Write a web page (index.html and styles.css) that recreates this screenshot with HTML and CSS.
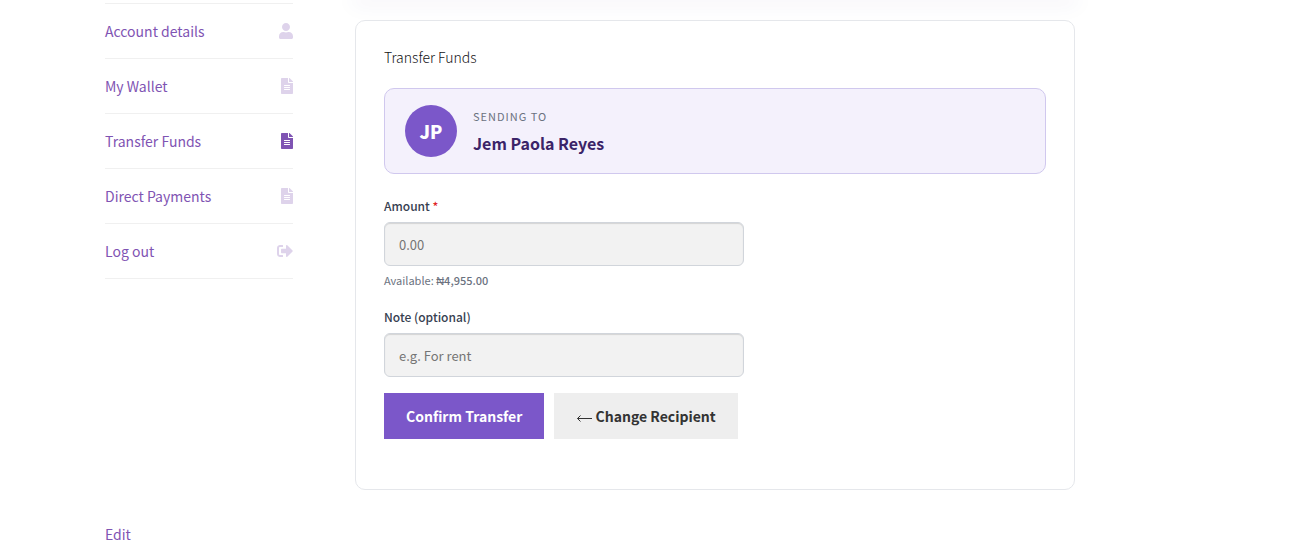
FILE: index.html
```html
<!DOCTYPE html>
<html lang="en">
<head>
  <meta charset="UTF-8" />
  <meta name="viewport" content="width=device-width, initial-scale=1" />
  <title>Transfer Funds</title>
  <link rel="stylesheet" href="styles.css">
</head>
<body>
  <svg width="0" height="0" class="sprite" aria-hidden="true">
    <symbol id="icon-user" viewBox="0 0 448 512" preserveAspectRatio="xMaxYMid">
      <path d="M224 256c70.700 0 128-57.300 128-128S294.700 0 224 0 96 57.300 96 128s57.300 128 128 128zm89.600 32h-16.700c-22.200 10.200-46.900 16-72.900 16s-50.600-5.800-72.900-16h-16.700C60.200 288 0 348.200 0 422.400V464c0 26.500 21.500 48 48 48h352c26.500 0 48-21.500 48-48v-41.600c0-74.200-60.200-134.400-134.400-134.400z"/>
    </symbol>
    <symbol id="icon-file" viewBox="0 0 384 512" preserveAspectRatio="xMaxYMid">
      <path d="M224 136V0H24C10.700 0 0 10.700 0 24v464c0 13.300 10.700 24 24 24h336c13.300 0 24-10.700 24-24V160H248c-13.200 0-24-10.800-24-24zm64 236c0 6.600-5.400 12-12 12H108c-6.600 0-12-5.400-12-12v-8c0-6.600 5.400-12 12-12h168c6.600 0 12 5.400 12 12v8zm0-64c0 6.600-5.400 12-12 12H108c-6.600 0-12-5.400-12-12v-8c0-6.600 5.400-12 12-12h168c6.600 0 12 5.400 12 12v8zm0-72v8c0 6.600-5.400 12-12 12H108c-6.600 0-12-5.400-12-12v-8c0-6.600 5.400-12 12-12h168c6.600 0 12 5.400 12 12zm96-114.100v6.100H256V0h6.100c6.400 0 12.500 2.500 17 7l97.900 98c4.500 4.500 7 10.600 7 16.900z"/>
    </symbol>
    <symbol id="icon-logout" viewBox="0 0 512 512">
      <path d="M497 273L329 441c-15 15-41 4.500-41-17v-96H152c-13.300 0-24-10.700-24-24v-96c0-13.300 10.700-24 24-24h136V88c0-21.400 25.900-32 41-17l168 168c9.300 9.400 9.300 24.600 0 34zM192 436v-40c0-6.600-5.400-12-12-12H96c-17.700 0-32-14.300-32-32V160c0-17.700 14.300-32 32-32h84c6.600 0 12-5.400 12-12V76c0-6.600-5.400-12-12-12H96c-53 0-96 43-96 96v192c0 53 43 96 96 96h84c6.600 0 12-5.400 12-12z"/>
    </symbol>
  </svg>

  <div class="container">
    <div class="account">
      <nav class="account-nav">
        <ul>
          <li><a href="#">Account details <svg class="icon"><use href="#icon-user"/></svg></a></li>
          <li><a href="#">My Wallet <svg class="icon"><use href="#icon-file"/></svg></a></li>
          <li class="active"><a href="#">Transfer Funds <svg class="icon"><use href="#icon-file"/></svg></a></li>
          <li><a href="#">Direct Payments <svg class="icon"><use href="#icon-file"/></svg></a></li>
          <li><a href="#">Log out <svg class="icon"><use href="#icon-logout"/></svg></a></li>
        </ul>
      </nav>

      <main class="content">
        <div class="wallet-card"></div>

        <section class="transfer-card">
          <h3>Transfer Funds</h3>

          <div class="recipient">
            <div class="avatar">JP</div>
            <div>
              <div class="recipient-label">Sending to</div>
              <div class="recipient-name">Jem Paola Reyes</div>
            </div>
          </div>

          <form>
            <div class="field">
              <label for="amount">Amount <span class="required">*</span></label>
              <input type="text" id="amount" name="amount" inputmode="decimal" placeholder="0.00" required />
              <p class="hint">Available: <strong>₦4,955.00</strong></p>
            </div>

            <div class="field">
              <label for="note">Note (optional)</label>
              <input type="text" id="note" name="note" placeholder="e.g. For rent" />
            </div>

            <div class="actions">
              <button type="submit" class="btn btn-primary">Confirm Transfer</button>
              <button type="button" class="btn">
                <svg class="arrow" viewBox="0 0 16 8" aria-hidden="true"><path d="M16 4.500H1.500M4.500 1.500L1.500 4.500L4.500 7.500"/></svg>
                Change Recipient
              </button>
            </div>
          </form>
        </section>
      </main>
    </div>

    <a href="#" class="edit-link">Edit</a>
  </div>
</body>
</html>
```
FILE: styles.css
```css
* {
  box-sizing: border-box;
}
body {
  margin: 0;
  background: #fff;
  color: #43454b;
  font-family: "Source Sans Pro", "Noto Sans CJK SC", sans-serif;
  font-size: 14px;
  line-height: 24px;
}
a {
  color: #7f54b3;
  text-decoration: none;
}
.sprite {
  display: block;
}
.container {
  max-width: 1098px;
  margin: 0 auto;
}
.account {
  display: flex;
  gap: 62px;
}

/* side menu */
.account-nav {
  flex: 0 0 188px;
}
.account-nav ul {
  list-style: none;
  margin: 3px 0 0;
  padding: 0;
  border-top: 1px solid #f0f0f0;
}
.account-nav li {
  border-bottom: 1px solid #f0f0f0;
}
.account-nav a {
  display: flex;
  justify-content: space-between;
  align-items: center;
  padding: 15px 0;
}
.icon {
  width: 16px;
  height: 16px;
  fill: currentColor;
  opacity: 0.25;
}
.active .icon {
  opacity: 1;
}

/* main column */
.content {
  flex: 1;
  max-width: 720px;
}
.wallet-card {
  border-radius: 12px;
  box-shadow: 0 0 20px 3px rgba(60, 40, 130, 0.1);
}
.transfer-card {
  margin-top: 20px;
  padding: 24px 28px 50px;
  border: 1px solid #e5e7eb;
  border-radius: 10px;
}
h3 {
  margin: 0 0 19px;
  font-size: 14px;
  font-weight: 300;
  line-height: 24px;
  color: #131315;
}
.recipient {
  display: flex;
  align-items: center;
  gap: 16px;
  padding: 16px 20px;
  margin-bottom: 24px;
  background: #f4f1fc;
  border: 1px solid #d0c8ee;
  border-radius: 10px;
}
.avatar {
  display: flex;
  align-items: center;
  justify-content: center;
  width: 52px;
  height: 52px;
  border-radius: 50%;
  background: #7b57c9;
  color: #fff;
  font-size: 18px;
  font-weight: 900;
}
.recipient-label {
  margin-bottom: 4px;
  font-size: 11px;
  line-height: 20px;
  letter-spacing: 1px;
  text-transform: uppercase;
  color: #6b7280;
}
.recipient-name {
  font-size: 16px;
  line-height: 26px;
  font-weight: 700;
  color: #3b2468;
}

/* form */
.field {
  margin-bottom: 16px;
}
label {
  display: block;
  margin-bottom: 8px;
  font-size: 12px;
  line-height: 16px;
  font-weight: 500;
  color: #374151;
}
.required {
  color: #e02424;
}
input {
  display: block;
  width: 100%;
  max-width: 360px;
  height: 44px;
  padding: 0 14px;
  border: 1px solid #d1d5db;
  border-radius: 6px;
  background: #f2f2f2;
  box-shadow: inset 0 1px 1px rgba(0, 0, 0, 0.125);
  font-family: inherit;
  font-size: 13px;
  color: #43454b;
}
input::placeholder {
  color: #757575;
}
.hint {
  margin: 5px 0 20px;
  font-size: 11px;
  line-height: 18px;
  color: #6b7280;
}
.hint strong {
  font-weight: 500;
}
.actions {
  display: flex;
  flex-wrap: wrap;
  gap: 10px;
}
.btn {
  padding: 11px 22px;
  border: 0;
  background: #eee;
  color: #333;
  font-family: inherit;
  font-size: 14px;
  font-weight: 600;
  line-height: 24px;
  cursor: pointer;
}
.btn-primary {
  background: #7b57c9;
  color: #fff;
}
.arrow {
  width: 16px;
  height: 8px;
  fill: none;
  stroke: currentColor;
}
.edit-link {
  display: inline-block;
  margin-top: 32px;
}
```
